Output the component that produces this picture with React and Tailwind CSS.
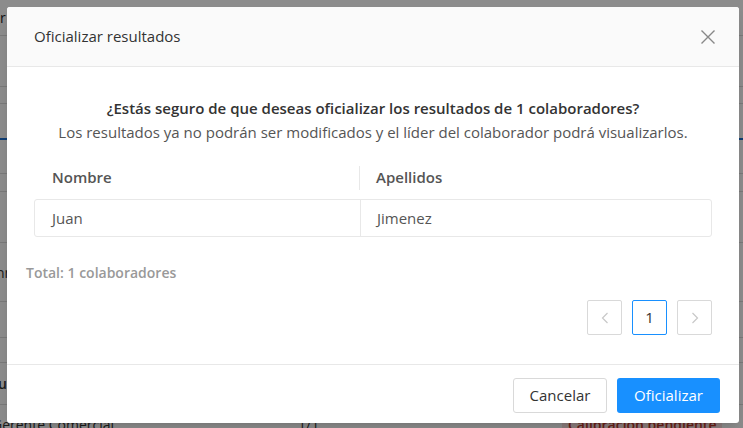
import React from "react";

function BgRow({ h, children, blue }) {
  return (
    <div
      className={`relative flex items-center border-b ${blue ? "border-[#1d6fd1] border-b-2" : "border-[#dcdcdc]"}`}
      style={{ height: h }}
    >
      {children}
    </div>
  );
}

export default function App() {
  return (
    <div
      className="relative w-[743px] h-[428px] overflow-hidden bg-white"
      style={{ fontFamily: '"Open Sans", "Noto Sans", sans-serif' }}
    >
      {/* background page */}
      <div className="flex flex-col text-[14px] text-[#333]">
        <BgRow h={36}><span className="text-[#222]">r</span></BgRow>
        <BgRow h={51} />
        <BgRow h={17} />
        <BgRow h={36} blue />
        <BgRow h={34} />
        <BgRow h={18} />
        <BgRow h={51} />
        <BgRow h={59}><span className="-ml-[4px]">nn</span></BgRow>
        <BgRow h={36} />
        <BgRow h={25} />
        <BgRow h={42}><span className="-ml-[2px] font-semibold">ue</span></BgRow>
        <div className="relative flex items-start h-[24px] pt-[10px] leading-[20px]">
          <span className="-ml-[8px] w-[300px] text-[#333]">Gerente Comercial</span>
          <span className="w-[270px] pl-[6px]">1/1</span>
          <span className="bg-[#fde2e2] text-[#c0392b] px-[6px] font-semibold">Calibración pendiente</span>
        </div>
      </div>

      {/* overlay */}
      <div className="absolute inset-0 bg-black/45" />

      {/* modal */}
      <div className="absolute left-[7px] top-[7px] w-[732px] h-[416px] bg-white rounded-[3px] flex flex-col shadow-lg">
        <div className="h-[60px] shrink-0 flex items-center justify-between bg-[#fafafa] border-b border-[#e8e8e8] pl-[27px] pr-[23px] rounded-t-[3px]">
          <span className="text-[15px] text-[#333]">Oficializar resultados</span>
          <svg width="16" height="16" viewBox="0 0 16 16" className="text-[#888]">
            <path d="M1.5 1.5 L14.5 14.5 M14.5 1.5 L1.5 14.5" stroke="currentColor" strokeWidth="1.4" fill="none" />
          </svg>
        </div>

        <div className="flex-1 flex flex-col px-[27px] pt-[29px]">
          <div className="text-center text-[15px] leading-[24px]">
            <div className="font-semibold text-[#333]">¿Estás seguro de que deseas oficializar los resultados de 1 colaboradores?</div>
            <div className="text-[#555]">Los resultados ya no podrán ser modificados y el líder del colaborador podrá visualizarlos.</div>
          </div>

          <div className="mt-[13px] text-[15px]">
            <div className="flex h-[41px] items-center font-semibold text-[#555]">
              <div className="w-[326px] pl-[18px] border-r border-[#e8e8e8] h-[24px] flex items-center">Nombre</div>
              <div className="flex-1 pl-[16px]">Apellidos</div>
            </div>
            <div className="flex h-[38px] items-stretch border border-[#e8e8e8] rounded-[3px] text-[#555] mt-[1px]">
              <div className="w-[326px] pl-[17px] border-r border-[#e8e8e8] flex items-center">Juan</div>
              <div className="flex-1 pl-[16px] flex items-center">Jimenez</div>
            </div>
          </div>

          <div className="-ml-[8px] mt-[25px] text-[14px] font-semibold text-[#999]">Total: 1 colaboradores</div>

          <div className="flex justify-end gap-[10px] mt-[17px]">
            <div className="w-[35px] h-[35px] border border-[#d9d9d9] rounded-[2px] flex items-center justify-center">
              <svg width="8" height="12" viewBox="0 0 8 12"><path d="M6.5 1 L1.5 6 L6.5 11" stroke="#c8c8c8" strokeWidth="1.2" fill="none" /></svg>
            </div>
            <div className="w-[35px] h-[35px] border border-[#1890ff] rounded-[2px] flex items-center justify-center text-[15px] text-[#333]">1</div>
            <div className="w-[35px] h-[35px] border border-[#d9d9d9] rounded-[2px] flex items-center justify-center">
              <svg width="8" height="12" viewBox="0 0 8 12"><path d="M1.5 1 L6.5 6 L1.5 11" stroke="#c8c8c8" strokeWidth="1.2" fill="none" /></svg>
            </div>
          </div>
        </div>

        <div className="h-[59px] shrink-0 border-t border-[#e8e8e8] flex items-center justify-end gap-[10px] pr-[19px] pt-[2px]">
          <button className="w-[94px] h-[35px] border border-[#d9d9d9] rounded-[3px] bg-white text-[15px] text-[#333]">Cancelar</button>
          <button className="w-[103px] h-[35px] rounded-[3px] bg-[#1890ff] text-[15px] text-white">Oficializar</button>
        </div>
      </div>
    </div>
  );
}
